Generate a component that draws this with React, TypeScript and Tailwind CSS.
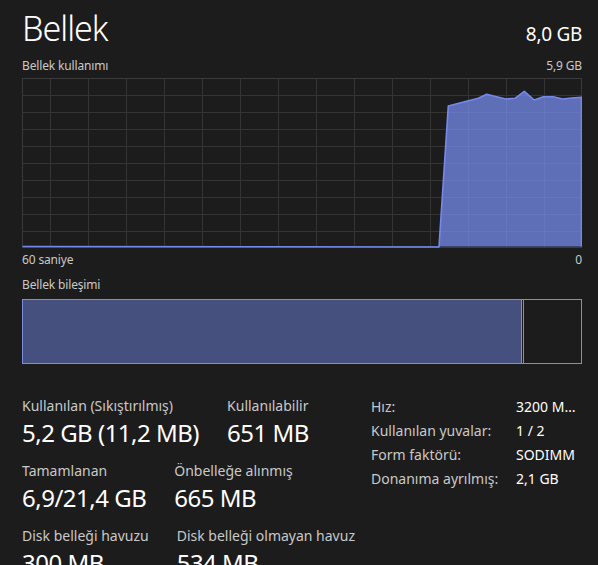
import React from "react";

const pts: [number, number][] = [
  [417, 169],
  [426.3, 28],
  [446.3, 22.7],
  [456.3, 20.3],
  [464.7, 16.3],
  [474.7, 18.7],
  [483.7, 21],
  [493, 20.3],
  [502.3, 13.3],
  [512.3, 22],
  [521.3, 18.7],
  [531.3, 18.7],
  [540.7, 21],
  [549.7, 20],
  [559.5, 19.3],
];

function Chart() {
  const W = 560;
  const H = 170;
  const vx: number[] = [];
  for (let x = 28; x < W; x += 38) vx.push(x);
  const hy: number[] = [];
  for (let y = 17; y < H; y += 17) hy.push(y);
  const line = "M0.5,168.5 " + pts.map((p) => `L${p[0]},${p[1]}`).join(" ") + ` L559.5,168.5`;
  const area = line + " Z";
  return (
    <svg width={W} height={H} className="block">
      <rect x={0} y={0} width={W} height={H} fill="#1c1c1c" />
      {vx.map((x) => (
        <line key={"v" + x} x1={x + 0.5} y1={0} x2={x + 0.5} y2={H} stroke="#343434" strokeWidth={1} />
      ))}
      {hy.map((y) => (
        <line key={"h" + y} x1={0} y1={y + 0.5} x2={W} y2={y + 0.5} stroke="#343434" strokeWidth={1} />
      ))}
      <rect x={0.5} y={0.5} width={W - 1} height={H - 1} fill="none" stroke="#3a3a3a" strokeWidth={1} />
      <path d={area} fill="rgba(124,147,249,0.7)" stroke="none" />
      <path d={line} fill="none" stroke="#7589ea" strokeWidth={1.6} strokeLinejoin="round" />
    </svg>
  );
}

function Stat({ label, value }: { label: string; value: string }) {
  return (
    <div className="flex flex-col whitespace-nowrap">
      <div className="text-[14px] leading-[20px] text-[#c9c9c9]">{label}</div>
      <div className="text-[24px] leading-[34px] tracking-[-0.5px] text-white">{value}</div>
    </div>
  );
}

export default function App() {
  return (
    <div className="min-h-screen h-[565px] overflow-hidden bg-[#1c1c1c] pl-[22px] pr-[16px] font-['Noto_Sans',sans-serif] text-white">
      <div className="flex items-baseline justify-between pt-[6px]">
        <div className="text-[34px] leading-[44px] tracking-[-1px] font-light text-white">Bellek</div>
        <div className="text-[19px] leading-[28px] tracking-[-0.3px] text-white">8,0 GB</div>
      </div>
      <div className="mt-[7px] flex items-baseline justify-between text-[12px] leading-[18px] tracking-[-0.15px] text-[#c9c9c9]">
        <span>Bellek kullanımı</span>
        <span>5,9 GB</span>
      </div>
      <div className="mt-[3px]">
        <Chart />
      </div>
      <div className="mt-[3px] flex justify-between text-[12px] leading-[18px] tracking-[-0.15px] text-[#c9c9c9]">
        <span>60 saniye</span>
        <span>0</span>
      </div>
      <div className="mt-[7px] text-[12px] leading-[18px] tracking-[-0.15px] text-[#c9c9c9]">Bellek bileşimi</div>
      <div className="mt-[5px] flex h-[65px] w-[560px] border border-[#7a8de0]">
        <div className="w-[499px] border-r border-[#7a8de0] bg-[#46507e]" />
        <div className="w-[1px]" />
        <div className="flex-1 border-l border-[#7a8de0]" />
      </div>
      <div className="mt-[29px] flex items-start">
        <div className="w-[349px] pt-[3px]">
          <div className="flex gap-[28px]">
            <Stat label="Kullanılan (Sıkıştırılmış)" value="5,2 GB (11,2 MB)" />
            <Stat label="Kullanılabilir" value="651 MB" />
          </div>
          <div className="mt-[11px] flex gap-[28px]">
            <Stat label="Tamamlanan" value="6,9/21,4 GB" />
            <Stat label="Önbelleğe alınmış" value="665 MB" />
          </div>
          <div className="mt-[11px] flex gap-[28px]">
            <Stat label="Disk belleği havuzu" value="300 MB" />
            <Stat label="Disk belleği olmayan havuz" value="534 MB" />
          </div>
        </div>
        <div className="grid grid-cols-[145px_62px] auto-rows-[24px] content-start self-start pt-[2px] text-[14px] leading-[24px]">
          <div className="text-[#c9c9c9]">Hız:</div>
          <div className="truncate whitespace-nowrap text-white">3200 MHz</div>
          <div className="text-[#c9c9c9]">Kullanılan yuvalar:</div>
          <div className="text-white">1 / 2</div>
          <div className="text-[#c9c9c9]">Form faktörü:</div>
          <div className="text-white">SODIMM</div>
          <div className="text-[#c9c9c9]">Donanıma ayrılmış:</div>
          <div className="text-white">2,1 GB</div>
        </div>
      </div>
    </div>
  );
}
